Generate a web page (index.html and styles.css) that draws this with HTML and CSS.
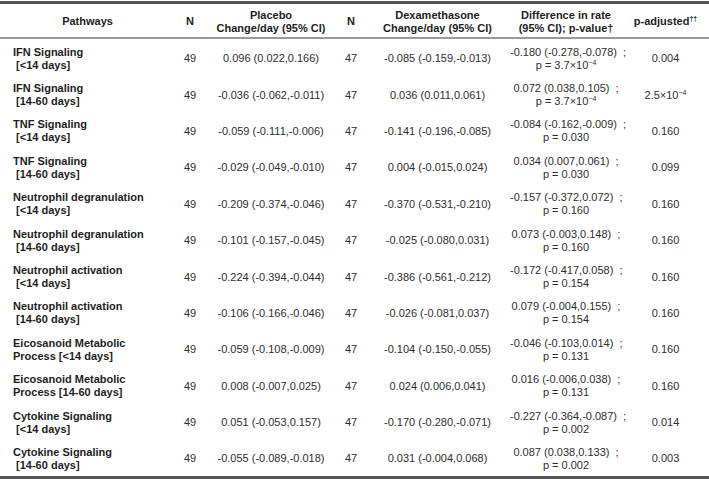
FILE: index.html
```html
<!DOCTYPE html>
<html>
<head>
<meta charset="utf-8">
<link rel="stylesheet" href="styles.css">
</head>
<body>
<div class="frame">
<table class="tbl">
  <colgroup>
    <col class="c-path"><col class="c-n"><col class="c-pl"><col class="c-n2"><col class="c-dx"><col class="c-diff"><col class="c-adj">
  </colgroup>
  <thead>
    <tr>
      <th>Pathways</th>
      <th>N</th>
      <th>Placebo<br>Change/day (95% CI)</th>
      <th>N</th>
      <th>Dexamethasone<br>Change/day (95% CI)</th>
      <th>Difference in rate<br>(95% CI); p-value†</th>
      <th>p-adjusted<sup>††</sup></th>
    </tr>
  </thead>
  <tbody>
    <tr><td class="path">IFN Signaling<br>&nbsp;[&lt;14 days]</td><td>49</td><td>0.096 (0.022,0.166)</td><td>47</td><td>-0.085 (-0.159,-0.013)</td><td>-0.180 (-0.278,-0.078)&nbsp; ;<br>p = 3.7×10<sup>−4</sup></td><td>0.004</td></tr>
    <tr><td class="path">IFN Signaling<br>&nbsp;[14-60 days]</td><td>49</td><td>-0.036 (-0.062,-0.011)</td><td>47</td><td>0.036 (0.011,0.061)</td><td>0.072 (0.038,0.105)&nbsp; ;<br>p = 3.7×10<sup>−4</sup></td><td>2.5×10<sup>−4</sup></td></tr>
    <tr><td class="path">TNF Signaling<br>&nbsp;[&lt;14 days]</td><td>49</td><td>-0.059 (-0.111,-0.006)</td><td>47</td><td>-0.141 (-0.196,-0.085)</td><td>-0.084 (-0.162,-0.009)&nbsp; ;<br>p = 0.030</td><td>0.160</td></tr>
    <tr><td class="path">TNF Signaling<br>&nbsp;[14-60 days]</td><td>49</td><td>-0.029 (-0.049,-0.010)</td><td>47</td><td>0.004 (-0.015,0.024)</td><td>0.034 (0.007,0.061)&nbsp; ;<br>p = 0.030</td><td>0.099</td></tr>
    <tr><td class="path">Neutrophil degranulation<br>&nbsp;[&lt;14 days]</td><td>49</td><td>-0.209 (-0.374,-0.046)</td><td>47</td><td>-0.370 (-0.531,-0.210)</td><td>-0.157 (-0.372,0.072)&nbsp; ;<br>p = 0.160</td><td>0.160</td></tr>
    <tr><td class="path">Neutrophil degranulation<br>&nbsp;[14-60 days]</td><td>49</td><td>-0.101 (-0.157,-0.045)</td><td>47</td><td>-0.025 (-0.080,0.031)</td><td>0.073 (-0.003,0.148)&nbsp; ;<br>p = 0.160</td><td>0.160</td></tr>
    <tr><td class="path">Neutrophil activation<br>&nbsp;[&lt;14 days]</td><td>49</td><td>-0.224 (-0.394,-0.044)</td><td>47</td><td>-0.386 (-0.561,-0.212)</td><td>-0.172 (-0.417,0.058)&nbsp; ;<br>p = 0.154</td><td>0.160</td></tr>
    <tr><td class="path">Neutrophil activation<br>&nbsp;[14-60 days]</td><td>49</td><td>-0.106 (-0.166,-0.046)</td><td>47</td><td>-0.026 (-0.081,0.037)</td><td>0.079 (-0.004,0.155)&nbsp; ;<br>p = 0.154</td><td>0.160</td></tr>
    <tr><td class="path">Eicosanoid Metabolic<br>Process [&lt;14 days]</td><td>49</td><td>-0.059 (-0.108,-0.009)</td><td>47</td><td>-0.104 (-0.150,-0.055)</td><td>-0.046 (-0.103,0.014)&nbsp; ;<br>p = 0.131</td><td>0.160</td></tr>
    <tr><td class="path">Eicosanoid Metabolic<br>Process [14-60 days]</td><td>49</td><td>0.008 (-0.007,0.025)</td><td>47</td><td>0.024 (0.006,0.041)</td><td>0.016 (-0.006,0.038)&nbsp; ;<br>p = 0.131</td><td>0.160</td></tr>
    <tr><td class="path">Cytokine Signaling<br>&nbsp;[&lt;14 days]</td><td>49</td><td>0.051 (-0.053,0.157)</td><td>47</td><td>-0.170 (-0.280,-0.071)</td><td>-0.227 (-0.364,-0.087)&nbsp; ;<br>p = 0.002</td><td>0.014</td></tr>
    <tr><td class="path">Cytokine Signaling<br>&nbsp;[14-60 days]</td><td>49</td><td>-0.055 (-0.089,-0.018)</td><td>47</td><td>0.031 (-0.004,0.068)</td><td>0.087 (0.038,0.133)&nbsp; ;<br>p = 0.002</td><td>0.003</td></tr>
  </tbody>
</table>
</div>
</body>
</html>
```
FILE: styles.css
```css
html, body {
  margin: 0;
  padding: 0;
  background: #ffffff;
}
body {
  padding-top: 1px;
  font-family: "Liberation Sans", Arial, sans-serif;
  font-size: 11px;
  color: #2e2e2e;
}
.frame {
  width: 709px;
  border-top: 3px solid #555555;
  border-bottom: 3px solid #555555;
}
.tbl {
  width: 709px;
  border-collapse: separate;
  border-spacing: 0;
  table-layout: fixed;
}
.c-path { width: 175px; }
.c-n { width: 30px; }
.c-pl { width: 132px; }
.c-n2 { width: 28px; }
.c-dx { width: 145px; }
.c-diff { width: 112px; }
.c-adj { width: 87px; }
.tbl thead tr {
  height: 35px;
}
.tbl th {
  font-weight: bold;
  color: #1e1e1e;
  line-height: 13px;
  text-align: center;
  vertical-align: middle;
  padding: 2px 0 0;
  border-bottom: 2px solid #9a9a9a;
}
.tbl tbody tr {
  height: 36.4px;
}
.tbl td {
  text-align: center;
  vertical-align: middle;
  line-height: 13px;
  padding: 3px 0 0;
  white-space: nowrap;
}
.tbl td.path {
  text-align: left;
  font-weight: bold;
  color: #1e1e1e;
  padding-left: 13px;
}
sup {
  font-size: 7px;
  line-height: 0;
  vertical-align: 4px;
}
```
